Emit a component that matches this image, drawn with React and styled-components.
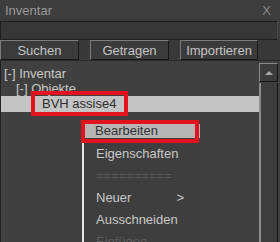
import styled, { createGlobalStyle } from "styled-components";

const GlobalStyle = createGlobalStyle`
  html, body {
    margin: 0;
    padding: 0;
    background: #404040;
  }
  body {
    font-family: "Liberation Sans", Arial, sans-serif;
    font-size: 13px;
  }
`;

const Window = styled.div`
  position: relative;
  width: 280px;
  height: 242px;
  overflow: hidden;
  background: #3c3c3c;
  display: flex;
  flex-direction: column;
`;

const TitleBar = styled.div`
  height: 21px;
  flex: none;
  display: flex;
  align-items: center;
  justify-content: space-between;
  padding: 0 9px 0 5px;
  background: #3d3d3d;
  color: #9a9a9a;
  font-size: 13px;
`;

const Close = styled.span`
  color: #8a8a8a;
  font-size: 13px;
`;

const SearchField = styled.div`
  height: 17px;
  flex: none;
  margin-right: 2px;
  background: #373737;
  border: 1px solid #1e1e1e;
  border-right-color: #4a4a4a;
`;

const ButtonRow = styled.div`
  height: 20px;
  flex: none;
  display: flex;
  gap: 11px;
  background: #393939;
`;

const TabButton = styled.div`
  width: ${(p) => p.$w}px;
  box-sizing: border-box;
  display: flex;
  align-items: center;
  justify-content: center;
  background: #3b3b3b;
  color: #c4c4c4;
  border-top: 1px solid #7c7c7c;
  border-left: 1px solid #7c7c7c;
  border-right: 1px solid #181818;
  border-bottom: 1px solid #181818;
`;

const Content = styled.div`
  flex: 1;
  display: flex;
  background: #404040;
  border-left: 1px solid #222;
  border-top: 1px solid #2a2a2a;
`;

const Tree = styled.div`
  flex: 1;
  padding-top: 5px;
`;

const TreeRow = styled.div`
  height: ${(p) => (p.$selected ? 16 : 15)}px;
  line-height: ${(p) => (p.$selected ? 16 : 15)}px;
  padding-left: ${(p) => p.$indent}px;
  background: ${(p) => (p.$selected ? "#c4c4c4" : "transparent")};
  color: ${(p) => (p.$selected ? "#2e2e2e" : "#c8c8c8")};
  white-space: nowrap;
`;

const Scrollbar = styled.div`
  width: 19px;
  margin: 2px 2px 0 0;
  display: flex;
  flex-direction: column;
`;

const ScrollUp = styled.div`
  height: 19px;
  box-sizing: border-box;
  display: flex;
  align-items: center;
  justify-content: center;
  background: #3c3c3c;
  border-top: 1px solid #8a8a8a;
  border-left: 1px solid #8a8a8a;
  border-right: 1px solid #141414;
  border-bottom: 1px solid #141414;
`;

const Arrow = styled.div`
  width: 0;
  height: 0;
  border-left: 4px solid transparent;
  border-right: 4px solid transparent;
  border-bottom: 4px solid #a8a8a8;
`;

const Track = styled.div`
  flex: 1;
  margin-top: 1px;
  background: #3c3c3c;
  border-left: 2px solid #8c8c8c;
  border-right: 1px solid #141414;
`;

const Marker = styled.div`
  position: absolute;
  left: ${(p) => p.$x}px;
  top: ${(p) => p.$y}px;
  width: ${(p) => p.$w}px;
  height: ${(p) => p.$h}px;
  box-sizing: border-box;
  border: 4px solid #e3121e;
  pointer-events: none;
`;

const Menu = styled.div`
  position: absolute;
  left: 82px;
  top: 120px;
  width: 116px;
  bottom: 0;
  background: #3e3e3e;
  border-left: 2px solid #e6e6e6;
`;

const MenuItem = styled.div`
  height: 22px;
  line-height: 22px;
  padding: 0 16px 0 12px;
  display: flex;
  justify-content: space-between;
  color: ${(p) => (p.$disabled ? "#5c5c5c" : "#c8c8c8")};
  white-space: nowrap;
`;

const ActiveItem = styled(MenuItem)`
  height: 14px;
  line-height: 14px;
  margin: 4px 0 5px -1px;
  background: #b6b6b6;
  color: #333;
`;

export default function App() {
  return (
    <>
      <GlobalStyle />
      <Window>
        <TitleBar>
          Inventar
          <Close>X</Close>
        </TitleBar>
        <SearchField />
        <ButtonRow>
          <TabButton $w={79}>Suchen</TabButton>
          <TabButton $w={79}>Getragen</TabButton>
          <TabButton $w={78}>Importieren</TabButton>
        </ButtonRow>
        <Content>
          <Tree>
            <TreeRow $indent={3}>[-] Inventar</TreeRow>
            <TreeRow $indent={15}>[-] Objekte</TreeRow>
            <TreeRow $indent={41} $selected>BVH assise4</TreeRow>
          </Tree>
          <Scrollbar>
            <ScrollUp>
              <Arrow />
            </ScrollUp>
            <Track />
          </Scrollbar>
        </Content>
        <Marker $x={31} $y={91} $w={97} $h={25} />
        <Menu>
          <ActiveItem>Bearbeiten</ActiveItem>
          <MenuItem>Eigenschaften</MenuItem>
          <MenuItem $disabled>==========</MenuItem>
          <MenuItem>
            <span>Neuer</span>
            <span>&gt;</span>
          </MenuItem>
          <MenuItem>Ausschneiden</MenuItem>
          <MenuItem $disabled>Einfügen</MenuItem>
        </Menu>
        <Marker $x={81} $y={120} $w={118} $h={23} />
      </Window>
    </>
  );
}
